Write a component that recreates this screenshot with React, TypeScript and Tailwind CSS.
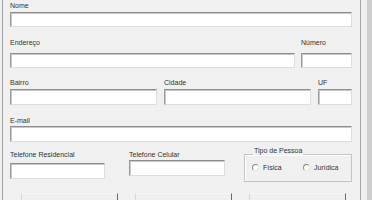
import React from "react";

const inputClass =
  "block w-full bg-white border border-t-[#8d8d8d] border-l-[#9c9c9c] border-r-[#dedede] border-b-[#dedede] shadow-[inset_1px_1px_0_#c9c9c9]";

type FieldProps = {
  label: string;
  width: string;
  gap: string;
  height?: string;
};

const Field = ({ label, width, gap, height = "h-[16px]" }: FieldProps) => (
  <div className={`${width} shrink-0`}>
    <div className="h-[9px] leading-[9px] whitespace-nowrap">{label}</div>
    <div className={`${inputClass} ${gap} ${height}`} />
  </div>
);

const Radio = ({ label, width }: { label: string; width: string }) => (
  <div className={`flex items-center gap-[4px] ${width}`}>
    <span className="block h-[7px] w-[7px] rounded-full border border-t-[#8a8a8a] border-l-[#8a8a8a] border-r-[#e6e6e6] border-b-[#e6e6e6] bg-white" />
    <span>{label}</span>
  </div>
);

const App = () => {
  return (
    <div
      className="flex h-[200px] w-[372px] overflow-hidden bg-[#f0f0f0] text-[7px] text-[#333333]"
      style={{ fontFamily: '"Liberation Sans", Arial, sans-serif' }}
    >
      <div className="ml-[2px] w-[359px] shrink-0 border-l border-r border-[#a3a3a3] pl-[7px] pr-[8px] pt-[1px]">
        {/* Nome */}
        <div>
          <div className="h-[9px] leading-[9px]">Nome</div>
          <div className={`${inputClass} mt-[2px] h-[15px]`} />
        </div>

        {/* Endereço / Número */}
        <div className="mt-[11px] flex gap-[6px]">
          <Field label="Endereço" width="w-[285px]" gap="mt-[6px]" height="h-[15px]" />
          <Field label="Número" width="w-[51px]" gap="mt-[6px]" height="h-[15px]" />
        </div>

        {/* Bairro / Cidade / UF */}
        <div className="mt-[10px] flex gap-[7px]">
          <Field label="Bairro" width="w-[147px]" gap="mt-[2px]" />
          <Field label="Cidade" width="w-[147px]" gap="mt-[2px]" />
          <Field label="UF" width="w-[34px]" gap="mt-[2px]" />
        </div>

        {/* E-mail */}
        <div className="mt-[11px]">
          <Field label="E-mail" width="w-full" gap="mt-[1px]" />
        </div>

        {/* Telefones / Tipo de Pessoa */}
        <div className="mt-[4px] flex items-start">
          <div className="pt-[4px]">
            <Field label="Telefone Residencial" width="w-[95px]" gap="mt-[4px]" />
          </div>
          <div className="ml-[24px] pt-[4px]">
            <Field label="Telefone Celular" width="w-[96px]" gap="mt-[1px]" />
          </div>
          <fieldset className="ml-[19px] w-[108px] border border-[#c4c4c4] pb-[9px] shadow-[inset_1px_1px_0_#ffffff]">
            <legend className="ml-[8px] px-[1px] pb-[7px] leading-[9px]">Tipo de Pessoa</legend>
            <div className="flex pl-[7px] pt-[1px] leading-[9px]">
              <Radio label="Física" width="w-[51px]" />
              <Radio label="Jurídica" width="w-[45px]" />
            </div>
          </fieldset>
        </div>

        {/* Botões */}
        <div className="mt-[11px] flex gap-[17px] pl-[11px]">
          <div className="h-[23px] w-[97px] border border-t-[#f7f7f7] border-l-[#d6d6d6] border-r-[#6a6a6a] border-b-[#6a6a6a]" />
          <div className="h-[23px] w-[97px] border border-t-[#f7f7f7] border-l-[#d6d6d6] border-r-[#6a6a6a] border-b-[#6a6a6a]" />
          <div className="h-[23px] w-[97px] border border-t-[#f7f7f7] border-l-[#d6d6d6] border-r-[#6a6a6a] border-b-[#6a6a6a]" />
        </div>
      </div>
      <div className="ml-auto w-[5px] bg-[#cdcdcd]" />
    </div>
  );
};

export default App;
